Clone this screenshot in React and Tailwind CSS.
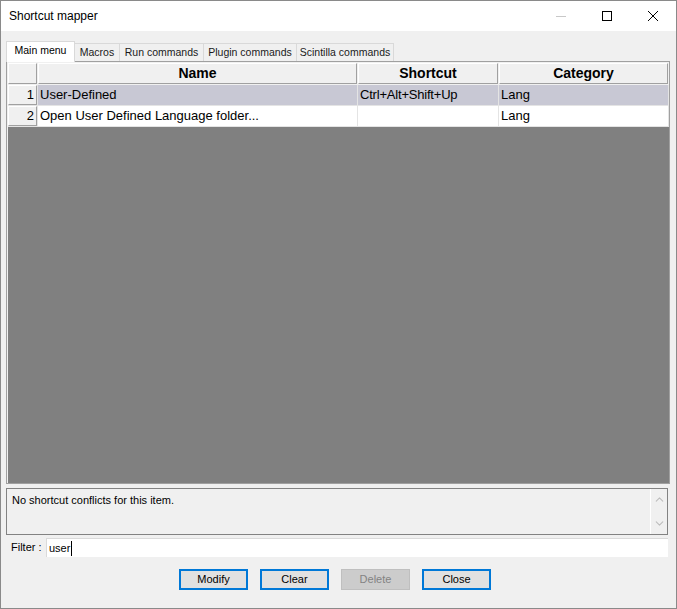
import { ChevronUp, ChevronDown } from 'lucide-react'

const TABS = [
  { label: 'Main menu', w: 'w-[69px]', active: true },
  { label: 'Macros', w: 'w-[45px]' },
  { label: 'Run commands', w: 'w-[84px]' },
  { label: 'Plugin commands', w: 'w-[93px]' },
  { label: 'Scintilla commands', w: 'w-[97px]' },
]

const ROWS = [
  { n: 1, name: 'User-Defined', shortcut: 'Ctrl+Alt+Shift+Up', category: 'Lang', selected: true },
  { n: 2, name: 'Open User Defined Language folder...', shortcut: '', category: 'Lang' },
]

function HeadCell({ className, children }) {
  return (
    <div className={`${className} h-full flex items-center justify-center bg-[#f0f0f0] border border-t-white border-l-white border-r-[#a0a0a0] border-b-[#a0a0a0] font-bold text-[14px] mr-px`}>
      {children}
    </div>
  )
}

function Btn({ children, disabled }) {
  if (disabled) {
    return (
      <div className="w-[69px] h-[21px] flex items-center justify-center bg-[#cccccc] border border-[#bfbfbf] text-[#838383] text-[11px]">
        {children}
      </div>
    )
  }
  return (
    <div className="w-[69px] h-[21px] flex items-center justify-center bg-[#e1e1e1] border-2 border-[#0078d7] text-[11px]">
      {children}
    </div>
  )
}

export default function App() {
  return (
    <div className="w-[677px] h-[609px] border border-[#8a8a8a] bg-[#f0f0f0] flex flex-col font-['Liberation_Sans',Arial,sans-serif] text-black overflow-hidden">
      {/* Title bar */}
      <div className="h-[30px] bg-white flex items-center shrink-0">
        <span className="pl-[8px] text-[12px] flex-1">Shortcut mapper</span>
        <div className="w-[46px] h-full flex items-center justify-center">
          <svg width="10" height="10" viewBox="0 0 10 10">
            <line x1="0" y1="5.5" x2="10" y2="5.5" stroke="#c8c8c8" strokeWidth="1" />
          </svg>
        </div>
        <div className="w-[46px] h-full flex items-center justify-center">
          <svg width="10" height="10" viewBox="0 0 10 10">
            <rect x="0.5" y="0.5" width="9" height="9" fill="none" stroke="#000" strokeWidth="1" />
          </svg>
        </div>
        <div className="w-[46px] h-full flex items-center justify-center">
          <svg width="10" height="10" viewBox="0 0 10 10">
            <path d="M0 0 L10 10 M10 0 L0 10" stroke="#000" strokeWidth="1" />
          </svg>
        </div>
      </div>

      {/* Tabs */}
      <div className="h-[20px] mt-[10px] pl-[5px] flex items-end relative z-10 shrink-0">
        {TABS.map(t => t.active ? (
          <div key={t.label} className={`${t.w} h-[21px] -mb-px bg-white border border-b-0 border-[#d9d9d9] flex items-center justify-center text-[10.5px] pb-[2px]`}>
            {t.label}
          </div>
        ) : (
          <div key={t.label} className={`${t.w} h-[18px] bg-[#f0f0f0] border border-l-0 border-b-0 border-[#d9d9d9] flex items-center justify-center text-[10.5px] text-[#1a1a1a]`}>
            {t.label}
          </div>
        ))}
      </div>

      {/* Grid */}
      <div className="ml-[5px] w-[664px] h-[423px] border border-[#a0a0a0] bg-[#f0f0f0] pt-px pl-px flex flex-col shrink-0">
        <div className="h-[21px] flex shrink-0">
          <HeadCell className="w-[29px]" />
          <HeadCell className="w-[319px]">Name</HeadCell>
          <HeadCell className="w-[140px]">Shortcut</HeadCell>
          <HeadCell className="w-[169px]">Category</HeadCell>
        </div>
        <div className="flex-1 bg-[#808080] mt-px">
          {ROWS.map(r => (
            <div key={r.n} className="h-[21px] flex bg-[#e4e4e4] pb-px">
              <div className="w-[29px] mr-px bg-[#f0f0f0] border border-t-white border-l-white border-r-[#a0a0a0] border-b-[#a0a0a0] flex items-center justify-end pr-[2px] text-[13px]">
                {r.n}
              </div>
              <div className={`w-[319px] mr-px flex items-center pl-[2px] text-[13px] ${r.selected ? 'bg-[#c8c8d4]' : 'bg-white'}`}>{r.name}</div>
              <div className={`w-[140px] mr-px flex items-center pl-[2px] text-[13px] tracking-[-0.2px] ${r.selected ? 'bg-[#c8c8d4]' : 'bg-white'}`}>{r.shortcut}</div>
              <div className={`w-[169px] mr-px flex items-center pl-[2px] text-[13px] ${r.selected ? 'bg-[#c8c8d4]' : 'bg-white'}`}>{r.category}</div>
            </div>
          ))}
        </div>
      </div>

      {/* Conflicts box */}
      <div className="ml-[5px] mt-[4px] w-[662px] h-[47px] border border-[#828282] flex shrink-0">
        <div className="flex-1 text-[11px] pl-[5px] pt-[3px]">No shortcut conflicts for this item.</div>
        <div className="w-[17px] border-l border-white flex flex-col items-center justify-between py-[4px] text-[#bdbdbd]">
          <ChevronUp size={13} strokeWidth={2} />
          <ChevronDown size={13} strokeWidth={2} />
        </div>
      </div>

      {/* Filter */}
      <div className="mt-[3px] h-[19px] flex items-center shrink-0">
        <span className="pl-[10px] w-[45px] text-[11px]">Filter :</span>
        <div className="w-[622px] h-full bg-white border-l border-t border-[#dadada] flex items-center pl-[2px] text-[11px]">
          user<span className="w-px h-[15px] bg-black ml-px" />
        </div>
      </div>

      {/* Buttons */}
      <div className="mt-[12px] pl-[178px] flex gap-[12px] shrink-0">
        <Btn>Modify</Btn>
        <Btn>Clear</Btn>
        <Btn disabled>Delete</Btn>
        <Btn>Close</Btn>
      </div>
    </div>
  )
}
